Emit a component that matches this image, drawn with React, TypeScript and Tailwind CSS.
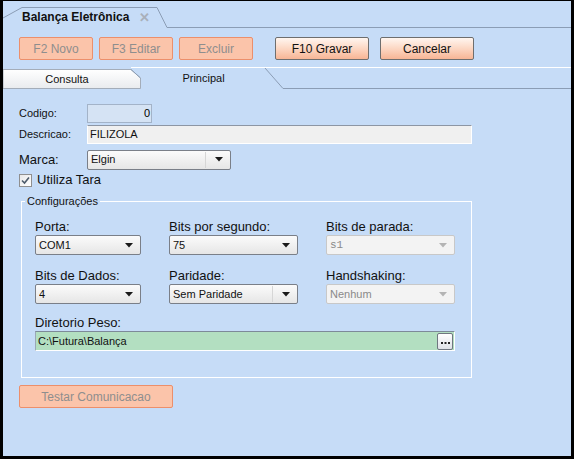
import React from "react";

const F = { fontFamily: '"Liberation Sans", Arial, sans-serif' };

function Arrow({ disabled }: { disabled?: boolean }) {
  return (
    <svg width="8" height="5" viewBox="0 0 8 5" className="shrink-0">
      <path d="M0 0 L8 0 L4 4.5 Z" fill={disabled ? "#b4b4b4" : "#1a1a1a"} />
    </svg>
  );
}

function Select({
  value,
  disabled,
  sep,
  mono,
  className = "",
}: {
  value: string;
  disabled?: boolean;
  sep?: boolean;
  mono?: boolean;
  className?: string;
}) {
  return (
    <div
      className={
        "h-[20px] flex items-center rounded-[2px] border pl-[3px] pr-[7px] text-[11px] " +
        (disabled
          ? "border-[#c8c8c8] bg-[#f3f3f3] text-[#8a8a8a] "
          : "border-[#7a7f88] bg-gradient-to-b from-[#fbfbfb] to-[#e6e6e6] text-[#111] ") +
        className
      }
    >
      <span
        className="flex-1 truncate"
        style={mono ? { fontFamily: '"Liberation Mono", monospace', fontSize: 11 } : undefined}
      >
        {value}
      </span>
      {sep && <div className="w-px h-[16px] bg-white border-l border-[#d6d6d6] mr-[9px]" />}
      <Arrow disabled={disabled} />
    </div>
  );
}

function DisabledBtn({ label, w }: { label: string; w: string }) {
  return (
    <div
      className={
        "h-[23px] flex items-center justify-center rounded-[2px] border border-[#ec8f6b] bg-[#fbc4aa] text-[12px] text-[#8e8e8e] " +
        w
      }
    >
      {label}
    </div>
  );
}

function Btn({ label, w }: { label: string; w: string }) {
  return (
    <div
      className={
        "h-[23px] flex items-center justify-center rounded-[2px] border border-[#6e6e6e] bg-gradient-to-b from-[#fff6f0] via-[#fcd7c3] to-[#f7b595] text-[12px] text-[#111] " +
        w
      }
    >
      {label}
    </div>
  );
}

export default function App() {
  return (
    <div
      className="w-[574px] h-[459px] bg-black pt-[1px] pl-[3px] pr-[3px] pb-[3px]"
      style={F}
    >
      <div className="w-full h-full bg-[#c6dcf7] flex flex-col">
        {/* Title tab strip */}
        <div className="relative h-[27px] shrink-0">
          <svg className="absolute inset-0" width="568" height="27" viewBox="0 0 568 27">
            <path
              d="M0 17 L19 6.5 L154 6.5 L164 26.5 L568 26.5"
              fill="none"
              stroke="#8b9db5"
              strokeWidth="1"
            />
          </svg>
          <div className="relative flex items-center h-full pt-[5px] pl-[19px]">
            <span className="text-[12px] font-bold text-[#111]">Balança Eletrônica</span>
            <span className="ml-[10px] text-[13px] font-bold text-[#a9b0ba] leading-none">✕</span>
          </div>
        </div>

        {/* Buttons */}
        <div className="flex items-center mt-[9px] pl-[16px] shrink-0">
          <DisabledBtn label="F2 Novo" w="w-[74px]" />
          <DisabledBtn label="F3 Editar" w="w-[74px] ml-[6px]" />
          <DisabledBtn label="Excluir" w="w-[74px] ml-[6px]" />
          <Btn label="F10 Gravar" w="w-[94px] ml-[22px]" />
          <Btn label="Cancelar" w="w-[94px] ml-[11px]" />
        </div>

        {/* Sub tabs */}
        <div className="relative h-[22px] mt-[7px] shrink-0">
          <svg className="absolute inset-0" width="568" height="22" viewBox="0 0 568 22">
            <defs>
              <linearGradient id="ct" x1="0" y1="0" x2="0" y2="1">
                <stop offset="0" stopColor="#ffffff" />
                <stop offset="1" stopColor="#e9ebee" />
              </linearGradient>
            </defs>
            <path d="M0 2.5 L128 2.5 L137.5 11 L137.5 21.5 L0 21.5 Z" fill="url(#ct)" stroke="#a4adb9" />
            <path d="M128 0.5 L568 0.5" stroke="#ffffff" />
            <path d="M262 1 L280 21.5 L568 21.5" fill="none" stroke="#8b9db5" />
            <path d="M128 2.5 L137.5 11" stroke="#8b9db5" />
          </svg>
          <div className="relative flex h-full items-center text-[11px] text-[#111]">
            <span className="w-[128px] text-center pt-[3px]">Consulta</span>
            <span className="ml-[10px] w[125px] w-[125px] text-center pt-[1px]">Principal</span>
          </div>
        </div>

        {/* Form */}
        <div className="flex flex-col pl-[16px]">
          <div className="flex items-center mt-[15px] h-[19px]">
            <span className="w-[68px] text-[11px] text-[#111]">Codigo:</span>
            <div className="w-[65px] h-[19px] border border-[#a3b3c8] bg-[#d5e3f4] text-[11px] text-right pr-[1px] flex items-center justify-end">
              0
            </div>
          </div>
          <div className="flex items-center mt-[2px] h-[19px]">
            <span className="w-[68px] text-[11px] text-[#111]">Descricao:</span>
            <div className="w-[385px] h-[19px] border border-white border-t-[#8d96a4] bg-[#f0f0f0] text-[11px] pl-[2px] flex items-center text-[#111]">
              FILIZOLA
            </div>
          </div>
          <div className="flex items-center mt-[6px] h-[19px]">
            <span className="w-[68px] text-[13px] text-[#111]">Marca:</span>
            <Select value="Elgin" sep className="w-[144px] h-[19px]" />
          </div>
          <div className="flex items-center mt-[4px] h-[14px]">
            <div className="w-[13px] h-[13px] border border-[#8f8f8f] bg-gradient-to-br from-[#e8e8e8] to-white flex items-center justify-center">
              <svg width="9" height="9" viewBox="0 0 9 9">
                <path d="M1 4.5 L3.5 7 L8 1.5" fill="none" stroke="#4d5b6b" strokeWidth="1.6" />
              </svg>
            </div>
            <span className="ml-[5px] text-[13px] text-[#111]">Utiliza Tara</span>
          </div>

          {/* Group box */}
          <div className="relative mt-[14px] ml-[2px] w-[451px] h-[177px] border border-white">
            <span className="absolute -top-[8px] left-[3px] px-[2px] bg-[#c6dcf7] text-[11px] text-[#111] leading-[14px]">
              Configurações
            </span>
            <div className="pl-[13px] pt-[17px] grid grid-cols-[106px_129px_129px] gap-x-[28px] text-[13px] text-[#111]">
              <span className="h-[16px] leading-[16px]">Porta:</span>
              <span className="h-[16px] leading-[16px]">Bits por segundo:</span>
              <span className="h-[16px] leading-[16px]">Bits de parada:</span>
              <Select value="COM1" />
              <Select value="75" />
              <Select value="s1" disabled mono />

              <span className="h-[16px] leading-[16px] mt-[13px]">Bits de Dados:</span>
              <span className="h-[16px] leading-[16px] mt-[13px]">Paridade:</span>
              <span className="h-[16px] leading-[16px] mt-[13px]">Handshaking:</span>
              <Select value="4" />
              <Select value="Sem Paridade" sep />
              <Select value="Nenhum" disabled />

              <span className="col-span-3 h-[16px] leading-[16px] mt-[11px]">Diretorio Peso:</span>
              <div className="col-span-3 h-[20px] flex items-center border border-white border-t-[#7d8a99] border-l-[#9aa8b6] bg-[#b3dfc1] pl-[2px] pr-[1px] text-[11px] text-[#111]">
                <span className="flex-1">C:\Futura\Balança</span>
                <div className="w-[16px] h-[17px] rounded-[2px] border border-[#6f7780] bg-gradient-to-b from-white to-[#dfe3e8] flex items-end justify-center pb-[4px]">
                  <svg width="9" height="3" viewBox="0 0 9 3">
                    <rect x="0" y="0" width="2" height="2" fill="#222" />
                    <rect x="3.5" y="0" width="2" height="2" fill="#222" />
                    <rect x="7" y="0" width="2" height="2" fill="#222" />
                  </svg>
                </div>
              </div>
            </div>
          </div>

          <div className="mt-[7px]">
            <DisabledBtn label="Testar Comunicacao" w="w-[154px]" />
          </div>
        </div>
      </div>
    </div>
  );
}
